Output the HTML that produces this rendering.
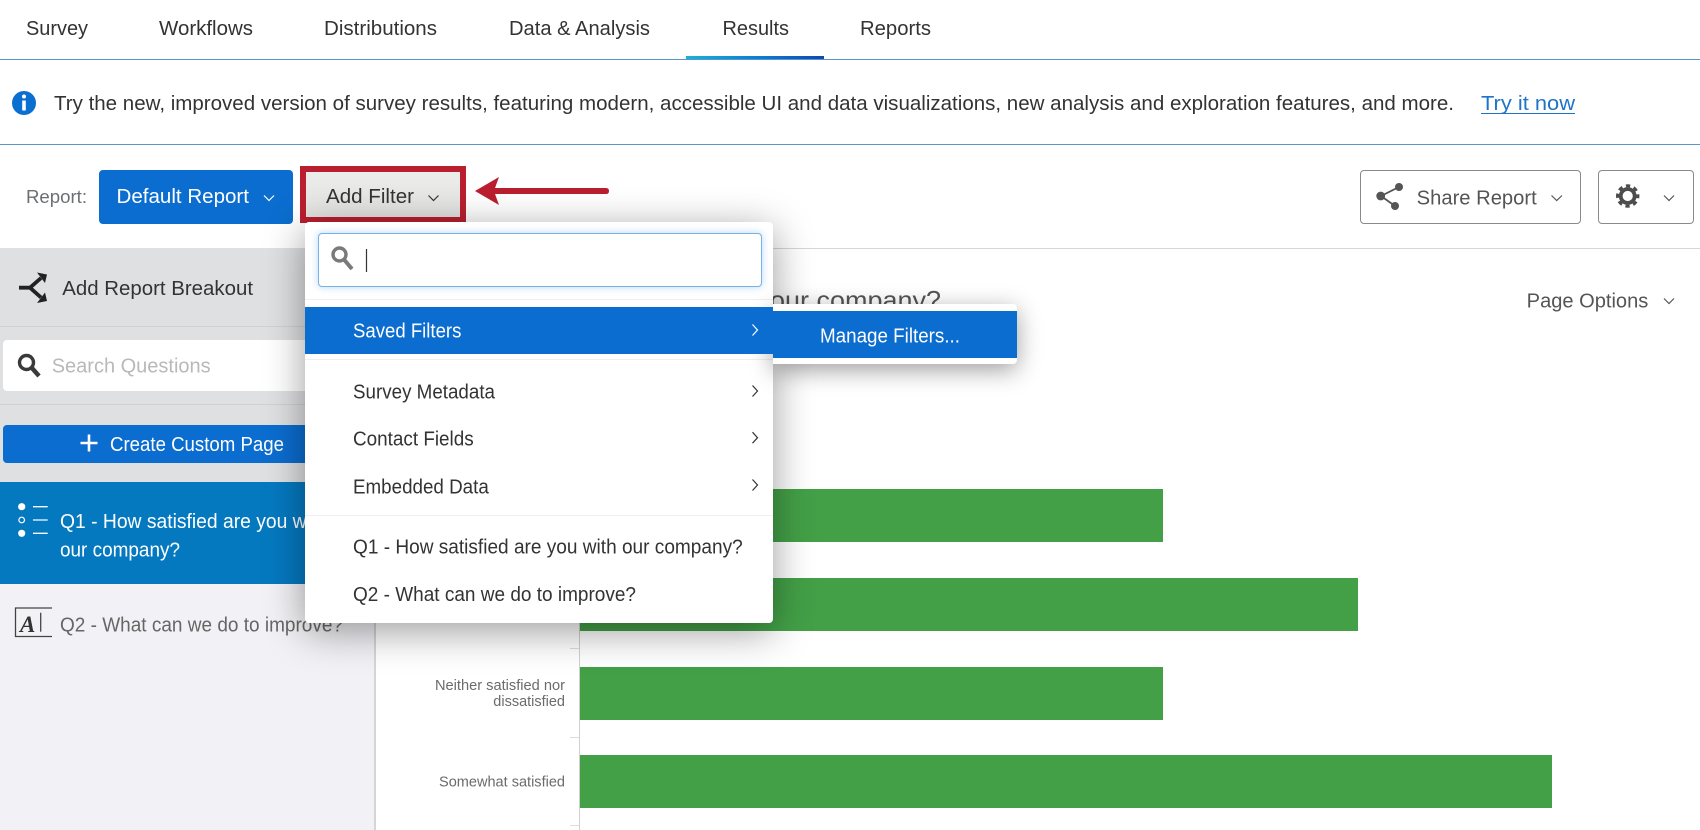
<!DOCTYPE html>
<html lang="en">
<head>
<meta charset="utf-8">
<title>Results - Add Filter</title>
<style>
html,body{margin:0;padding:0;background:#fff}
#page{position:relative;width:1700px;height:830px;overflow:hidden;background:#fff;font-family:"Liberation Sans",sans-serif}
.a{position:absolute}
svg.layer{position:absolute;left:0;top:0;width:1700px;height:830px;overflow:visible}
svg text{font-family:"Liberation Sans",sans-serif;font-size:20px;fill:#333}
</style>
</head>
<body>
<div id="page">
  <!-- top lines -->
  <div class="a" style="left:0;top:59px;width:1700px;height:1px;background:#5a96cc"></div>
  <div class="a" style="left:686px;top:56px;width:138px;height:3px;background:linear-gradient(90deg,#19b2d6,#0b7bd0 55%,#1546ad)"></div>
  <div class="a" style="left:0;top:144px;width:1700px;height:1px;background:#5a96cc"></div>
  <div class="a" style="left:0;top:248px;width:1700px;height:1px;background:#d6d6d6"></div>

  <!-- sidebar -->
  <div class="a" style="left:0;top:248px;width:374px;height:582px;background:#f2f2f6"></div>
  <div class="a" style="left:0;top:248px;width:374px;height:234px;background:#dfe0e2"></div>
  <div class="a" style="left:374px;top:248px;width:2px;height:582px;background:#d5d5d7"></div>
  <div class="a" style="left:0;top:326px;width:374px;height:1px;background:#d0d1d3"></div>
  <div class="a" style="left:0;top:404px;width:374px;height:1px;background:#d0d1d3"></div>
  <div class="a" style="left:3px;top:340px;width:360px;height:51px;background:#fff;border-radius:4px"></div>
  <div class="a" style="left:3px;top:425px;width:360px;height:38px;background:#0b6dcf;border-radius:4px"></div>
  <div class="a" style="left:0;top:482px;width:374px;height:102px;background:#0579c0"></div>

  <!-- buttons -->
  <div class="a" style="left:99px;top:170px;width:194px;height:54px;background:#0b6dcf;border-radius:4px"></div>
  <div class="a" style="left:300px;top:166px;width:154px;height:45px;border:6px solid #b91f2f;background:linear-gradient(#ececea,#e2e2e0)"></div>
  <div class="a" style="left:1360px;top:170px;width:219px;height:52px;border:1px solid #8a8a8a;border-radius:4px;background:#fff"></div>
  <div class="a" style="left:1598px;top:170px;width:94px;height:52px;border:1px solid #8a8a8a;border-radius:4px;background:#fff"></div>

  <!-- chart bars -->
  <div class="a" style="left:579px;top:440px;width:1px;height:390px;background:#d0d0d0"></div>
  <div class="a" style="left:580px;top:489px;width:583px;height:53px;background:#43a047"></div>
  <div class="a" style="left:580px;top:578px;width:778px;height:53px;background:#43a047"></div>
  <div class="a" style="left:580px;top:667px;width:583px;height:53px;background:#43a047"></div>
  <div class="a" style="left:580px;top:755px;width:972px;height:53px;background:#43a047"></div>
  <div class="a" style="left:570px;top:648px;width:9px;height:1px;background:#dcdcdc"></div>
  <div class="a" style="left:570px;top:737px;width:9px;height:1px;background:#dcdcdc"></div>
  <div class="a" style="left:570px;top:825px;width:9px;height:1px;background:#dcdcdc"></div>

  <svg class="layer" viewBox="0 0 1700 830" xmlns="http://www.w3.org/2000/svg">
    <!-- tabs -->
    <text x="26" y="35" textLength="62" lengthAdjust="spacingAndGlyphs">Survey</text>
    <text x="159" y="35" textLength="94" lengthAdjust="spacingAndGlyphs">Workflows</text>
    <text x="324" y="35" textLength="113" lengthAdjust="spacingAndGlyphs">Distributions</text>
    <text x="509" y="35" textLength="141" lengthAdjust="spacingAndGlyphs">Data &amp; Analysis</text>
    <text x="722.5" y="35" textLength="66.5" lengthAdjust="spacingAndGlyphs">Results</text>
    <text x="860" y="35" textLength="71" lengthAdjust="spacingAndGlyphs">Reports</text>

    <!-- notice -->
    <circle cx="24" cy="103" r="12" fill="#0b6fd2"/>
    <circle cx="24" cy="96.5" r="2" fill="#fff"/>
    <rect x="22.2" y="100.5" width="3.6" height="10" fill="#fff"/>
    <text x="54" y="110" textLength="1400" lengthAdjust="spacingAndGlyphs">Try the new, improved version of survey results, featuring modern, accessible UI and data visualizations, new analysis and exploration features, and more.</text>
    <text x="1481" y="110" textLength="94" lengthAdjust="spacingAndGlyphs" style="fill:#1f74c8">Try it now</text>
    <rect x="1481" y="113" width="94" height="1" fill="#1f74c8"/>

    <!-- toolbar -->
    <text x="26" y="203" textLength="61" lengthAdjust="spacingAndGlyphs" style="fill:#6b6f73;font-size:18.5px">Report:</text>
    <text x="116.5" y="203" textLength="132.5" lengthAdjust="spacingAndGlyphs" style="fill:#fff">Default Report</text>
    <polyline points="264,195.5 269,200.5 274,195.5" fill="none" stroke="#fff" stroke-width="1.2"/>
    <text x="326" y="203" textLength="88" lengthAdjust="spacingAndGlyphs">Add Filter</text>
    <polyline points="428.5,195.5 433.5,200.5 438.5,195.5" fill="none" stroke="#333" stroke-width="1.2"/>
    <path d="M475 191 L499 177 L495 188 H606 Q609 188 609 191 Q609 194 606 194 H495 L499 205 Z" fill="#b91f2f"/>

    <path d="M1381 196 L1399 187 M1381 196 L1395 206" stroke="#555" stroke-width="1.8" fill="none"/>
    <circle cx="1380.7" cy="196" r="4.4" fill="#555"/>
    <circle cx="1399" cy="187" r="4" fill="#555"/>
    <circle cx="1395" cy="206" r="4" fill="#555"/>
    <text x="1416.7" y="204.5" textLength="120" lengthAdjust="spacingAndGlyphs" style="fill:#555">Share Report</text>
    <polyline points="1551.5,195.5 1556.7,200.5 1562,195.5" fill="none" stroke="#555" stroke-width="1.2"/>
    <circle cx="1627.7" cy="196" r="7" fill="none" stroke="#4d4d4d" stroke-width="3.8"/>
    <circle cx="1627.7" cy="196" r="10.2" fill="none" stroke="#4d4d4d" stroke-width="3" stroke-dasharray="4.3 3.71" stroke-dashoffset="2.1"/>
    <polyline points="1664,195.5 1669,200.5 1674,195.5" fill="none" stroke="#555" stroke-width="1.2"/>

    <!-- title -->
    <text x="763" y="309" text-anchor="end" style="font-size:26px;fill:#555">Q1 - How satisfied are you with</text>
    <text x="770" y="309" textLength="171" lengthAdjust="spacingAndGlyphs" style="font-size:26px;fill:#555">our company?</text>
    <text x="1526.7" y="307.5" textLength="121.6" lengthAdjust="spacingAndGlyphs" style="fill:#555">Page Options</text>
    <polyline points="1664,298.5 1669,303.5 1674,298.5" fill="none" stroke="#555" stroke-width="1.2"/>

    <!-- sidebar contents -->
    <path d="M19 287.7 H30 L41 278 M30 287.7 L41 297.5" fill="none" stroke="#222" stroke-width="3.8"/>
    <path d="M37 272.5 L47 274.5 L45 283 Z M37 303 L47 301 L45 292.5 Z" fill="#222"/>
    <text x="62.3" y="295" textLength="190.7" lengthAdjust="spacingAndGlyphs">Add Report Breakout</text>

    <circle cx="26.5" cy="362.5" r="7" fill="none" stroke="#3a3a3a" stroke-width="3.4"/>
    <line x1="31.5" y1="367.5" x2="39" y2="376" stroke="#3a3a3a" stroke-width="4.4"/>
    <text x="51.7" y="372.5" textLength="159" lengthAdjust="spacingAndGlyphs" style="fill:#b9b9b9">Search Questions</text>

    <path d="M89 434.5 V451.5 M80.5 443 H97.5" stroke="#fff" stroke-width="2.6"/>
    <text x="110" y="451" textLength="174" lengthAdjust="spacingAndGlyphs" style="fill:#fff">Create Custom Page</text>

    <circle cx="21.7" cy="506.7" r="3.6" fill="#fff"/>
    <circle cx="21.7" cy="520" r="2.8" fill="none" stroke="#fff" stroke-width="1.2"/>
    <circle cx="21.7" cy="533.3" r="3.6" fill="#fff"/>
    <path d="M33 506.7 H47.7 M33 520 H47.7 M33 533.3 H47.7" stroke="#fff" stroke-width="1.3"/>
    <text x="60" y="528" textLength="267" lengthAdjust="spacingAndGlyphs" style="fill:#fff">Q1 - How satisfied are you with</text>
    <text x="60" y="556.7" textLength="120" lengthAdjust="spacingAndGlyphs" style="fill:#fff">our company?</text>

    <path d="M52 608 H15.5 V636.5 H52" fill="none" stroke="#444" stroke-width="1.3"/>
    <line x1="40.7" y1="612.7" x2="40.7" y2="631.7" stroke="#444" stroke-width="1.3"/>
    <text x="20" y="632" style="font-family:'Liberation Serif',serif;font-style:italic;font-weight:bold;font-size:23px;fill:#333">A</text>
    <text x="60" y="631.7" textLength="283" lengthAdjust="spacingAndGlyphs" style="fill:#666">Q2 - What can we do to improve?</text>

    <!-- chart labels -->
    <text x="565" y="690" text-anchor="end" textLength="130" lengthAdjust="spacingAndGlyphs" style="font-size:14.5px;fill:#6b6b6b">Neither satisfied nor</text>
    <text x="565" y="706" text-anchor="end" textLength="71.7" lengthAdjust="spacingAndGlyphs" style="font-size:14.5px;fill:#6b6b6b">dissatisfied</text>
    <text x="565" y="786.7" text-anchor="end" textLength="126" lengthAdjust="spacingAndGlyphs" style="font-size:14.5px;fill:#6b6b6b">Somewhat satisfied</text>
  </svg>

  <!-- dropdown menu -->
  <div class="a" style="left:305px;top:222px;width:468px;height:401px;background:#fff;border-radius:4px;box-shadow:0 8px 40px rgba(0,0,0,.4)"></div>
  <div class="a" style="left:305px;top:299px;width:468px;height:1px;background:#f0f0f0"></div>
  <div class="a" style="left:305px;top:359px;width:468px;height:1px;background:#f0f0f0"></div>
  <div class="a" style="left:305px;top:515px;width:468px;height:1px;background:#f0f0f0"></div>
  <div class="a" style="left:305px;top:307px;width:468px;height:47px;background:#0b6dcf"></div>
  <div class="a" style="left:318px;top:233px;width:442px;height:52px;border:1px solid #7ab0e2;border-radius:4px;background:#fff;box-shadow:0 0 8px rgba(90,170,240,.45)"></div>

  <!-- submenu -->
  <div class="a" style="left:773px;top:304px;width:244px;height:60px;background:#fff;border-radius:0 4px 4px 0;box-shadow:0 6px 24px rgba(0,0,0,.38)"></div>
  <div class="a" style="left:773px;top:311px;width:244px;height:47px;background:#0b6dcf"></div>
  <div class="a" style="left:305px;top:307px;width:468px;height:47px;background:#0b6dcf"></div>

  <svg class="layer" viewBox="0 0 1700 830" xmlns="http://www.w3.org/2000/svg">
    <circle cx="339.5" cy="254.5" r="6.5" fill="none" stroke="#7a7a7a" stroke-width="3.4"/>
    <line x1="344" y1="259.5" x2="352" y2="269" stroke="#7a7a7a" stroke-width="4"/>
    <line x1="366.5" y1="249" x2="366.5" y2="272" stroke="#333" stroke-width="1.2"/>

    <text x="353" y="337.7" textLength="108.4" lengthAdjust="spacingAndGlyphs" style="fill:#fff">Saved Filters</text>
    <polyline points="752.5,324.5 757.5,330 752.5,335.5" fill="none" stroke="#fff" stroke-width="1.2"/>
    <text x="820" y="342.3" textLength="140" lengthAdjust="spacingAndGlyphs" style="fill:#fff">Manage Filters...</text>

    <text x="353" y="398.7" textLength="142" lengthAdjust="spacingAndGlyphs">Survey Metadata</text>
    <polyline points="752.5,385.5 757.5,391 752.5,396.5" fill="none" stroke="#333" stroke-width="1.2"/>
    <text x="353" y="445.7" textLength="120.7" lengthAdjust="spacingAndGlyphs">Contact Fields</text>
    <polyline points="752.5,432.2 757.5,437.7 752.5,443.2" fill="none" stroke="#333" stroke-width="1.2"/>
    <text x="353" y="493.3" textLength="135.8" lengthAdjust="spacingAndGlyphs">Embedded Data</text>
    <polyline points="752.5,479.5 757.5,485 752.5,490.5" fill="none" stroke="#333" stroke-width="1.2"/>
    <text x="353" y="553.3" textLength="389.7" lengthAdjust="spacingAndGlyphs">Q1 - How satisfied are you with our company?</text>
    <text x="353" y="601" textLength="283" lengthAdjust="spacingAndGlyphs">Q2 - What can we do to improve?</text>
  </svg>
</div>
</body>
</html>
